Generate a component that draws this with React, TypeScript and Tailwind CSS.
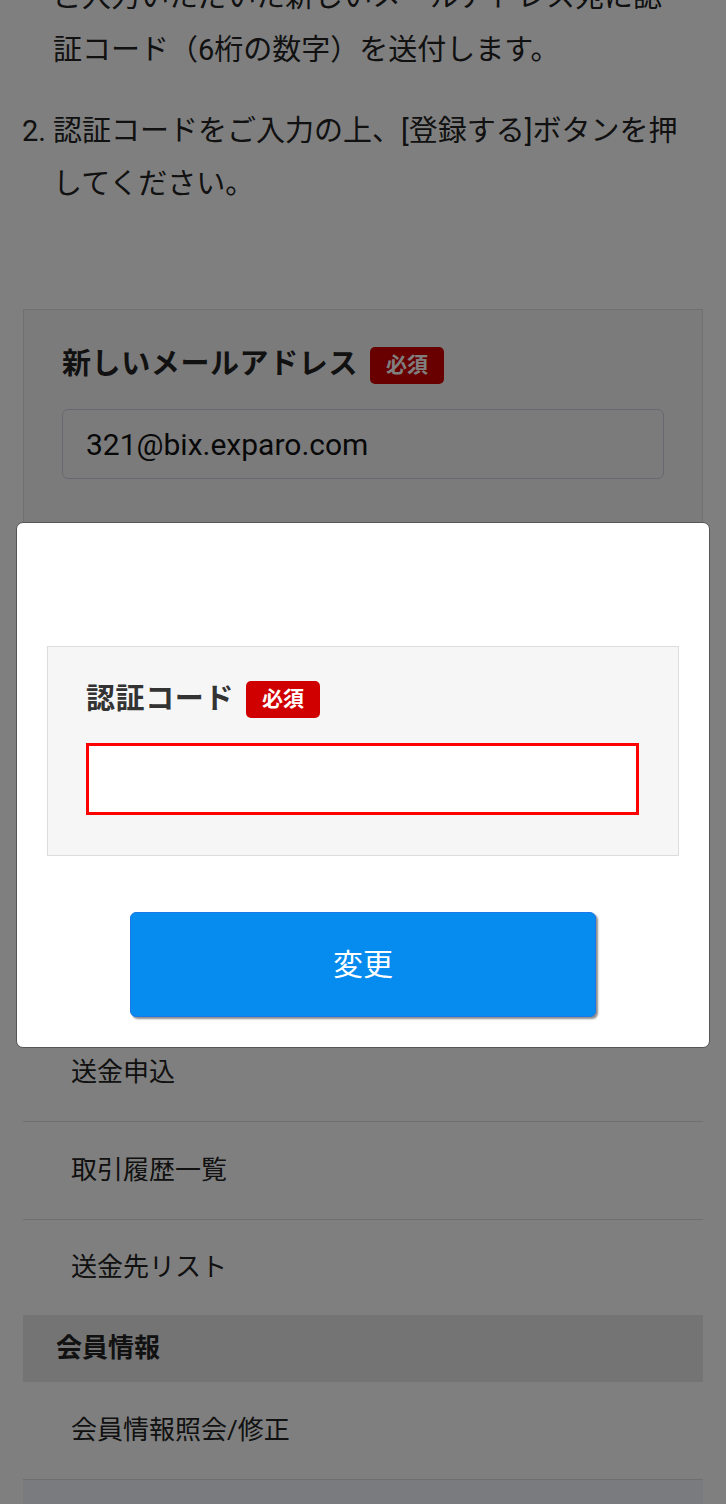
import React from 'react';

function Badge() {
  return (
    <span className="ml-3 inline-flex h-[37px] w-[74px] items-center justify-center rounded-[5px] bg-[#d10000] text-[21px] font-bold leading-none text-white">
      必須
    </span>
  );
}

const menuItems = ['送金申込', '取引履歴一覧'];

export default function App() {
  return (
    <div className="relative h-[1504px] w-full overflow-hidden bg-white font-['Roboto','Noto_Sans_CJK_JP',sans-serif] text-[#222]">
      {/* page behind the dialog, scrolled a little */}
      <div className="mt-[-82px]">
        <ol className="pl-[22px] pr-[10px] text-[29px] leading-[53px]">
          <li className="flex">
            <span className="w-[31px] shrink-0">1.</span>
            <span className="whitespace-nowrap">
              [認証コード送信]ボタンを押すと、
              <br />
              ご入力いただいた新しいメールアドレス宛に認
              <br />
              証コード（6桁の数字）を送付します。
            </span>
          </li>
          <li className="mt-[28px] flex">
            <span className="w-[31px] shrink-0">2.</span>
            <span className="whitespace-nowrap">
              認証コードをご入力の上、[登録する]ボタンを押
              <br />
              してください。
            </span>
          </li>
        </ol>

        <div className="mx-[23px] mt-[98px] border border-[#e0e0e0] bg-[#f6f6f6] px-[38px] pt-[35px] pb-[60px]">
          <div className="flex h-[40px] items-center">
            <span className="text-[29px] font-bold tracking-[0.6px] text-[#222]">新しいメールアドレス</span>
            <Badge />
          </div>
          <div className="mt-[24px] flex h-[70px] items-center rounded-[6px] border border-[#cdd3dc] bg-[#f7f7f7] px-[23px] text-[30px] text-[#111]">
            321@bix.exparo.com
          </div>
        </div>

        <div className="flex h-[484px] items-center justify-center">
          <div className="h-[90px] w-[460px] rounded-md bg-[#068bee]" />
        </div>

        <div className="mx-[23px] text-[26px]">
          {menuItems.map((item) => (
            <div key={item} className="flex h-[98px] items-center border-b border-[#dedede] pl-[48px]">
              {item}
            </div>
          ))}
          <div className="flex h-[95px] items-center pl-[48px]">送金先リスト</div>
          <div className="flex h-[67px] items-center bg-[#e8e8e8] pl-[33px] font-bold">会員情報</div>
          <div className="flex h-[98px] items-center border-b border-[#dedede] pl-[48px]">会員情報照会/修正</div>
          <div className="h-[60px] bg-[#f5f7fd]" />
        </div>
      </div>

      {/* overlay */}
      <div className="absolute inset-0 z-10 bg-black/50" />

      {/* dialog */}
      <div className="absolute left-[16px] top-[522px] z-20 w-[694px] rounded-[7px] border border-[#555] bg-white px-[30px] pt-[123px] pb-[30px]">
        <div className="border border-[#dddddd] bg-[#f6f6f6] pl-[38px] pr-[39px] pt-[34px] pb-[40px]">
          <div className="flex h-[37px] items-center">
            <span className="text-[29px] font-bold tracking-[0.6px] text-[#333]">認証コード</span>
            <Badge />
          </div>
          <input
            className="mt-[25px] block h-[72px] w-full border-[3px] border-[#ff0000] bg-white px-4 text-[28px] outline-none"
            type="text"
          />
        </div>
        <div className="mt-[56px] flex justify-center">
          <button className="h-[105px] w-[466px] rounded-[6px] border border-[#1a78ea] bg-[#068bee] text-[30px] text-white shadow-[2px_2px_2px_rgba(0,0,0,0.45)]">
            変更
          </button>
        </div>
      </div>
    </div>
  );
}
